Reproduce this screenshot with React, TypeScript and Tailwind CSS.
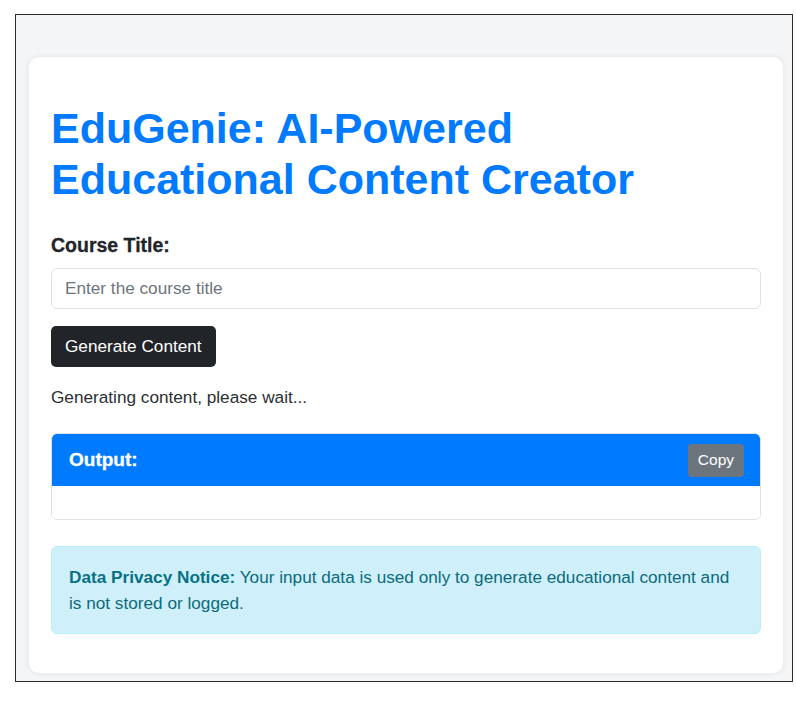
export default function App() {
  return (
    <div className="min-h-[707px] bg-white pt-[14px] pl-[15px] font-['Liberation_Sans',Arial,sans-serif]">
      <div className="w-[778px] h-[668px] border border-[#2b2b2b] bg-[#f4f5f7] overflow-hidden pt-[42px] pl-[13px]">
        <main className="w-[754px] h-[616px] bg-white rounded-[10px] shadow-[0_0_6px_rgba(0,0,0,0.08)] pt-[46px] pb-[39px] px-[22px] flex flex-col">
          <h1 className="text-[43px] leading-[51px] font-bold text-[#007bff]">
            EduGenie: AI-Powered Educational Content Creator
          </h1>

          <label
            htmlFor="courseTitle"
            className="mt-[26px] text-[19.5px] leading-[28px] font-bold text-[#212529] [-webkit-text-stroke:0.3px_#212529]"
          >
            Course Title:
          </label>
          <input
            id="courseTitle"
            type="text"
            placeholder="Enter the course title"
            className="mt-[9px] h-[41px] w-full rounded-[6px] border border-[#dee2e6] px-[13px] text-[17.2px] text-[#212529] placeholder:text-[#6c757d] outline-none"
          />

          <div className="mt-[17px]">
            <button className="h-[41px] px-[14px] rounded-[5px] bg-[#212529] text-white text-[17.2px]">
              Generate Content
            </button>
          </div>

          <p className="mt-[17px] text-[17.2px] leading-[26px] text-[#2b2f33]">
            Generating content, please wait...
          </p>

          <section className="mt-[23px] h-[87px] rounded-[6px] border border-[#dee2e6] overflow-hidden flex flex-col">
            <div className="h-[52px] bg-[#007bff] flex items-center justify-between pl-[17px] pr-[16px]">
              <h2 className="text-[19px] font-bold text-white [-webkit-text-stroke:0.3px_#ffffff]">
                Output:
              </h2>
              <button className="h-[33px] px-[10px] rounded-[4px] bg-[#6c757d] text-white text-[15.5px]">
                Copy
              </button>
            </div>
            <div className="flex-1 bg-white"></div>
          </section>

          <div className="mt-[26px] rounded-[6px] border border-[#b6effb] bg-[#cff0fa] pl-[17px] pr-[26px] py-[17px] text-[17.2px] leading-[26px] text-[#0b6a7c]">
            <strong className="font-bold text-[#087085]">Data Privacy Notice:</strong>{" "}
            Your input data is used only to generate educational content and is not
            stored or logged.
          </div>
        </main>
      </div>
    </div>
  );
}
